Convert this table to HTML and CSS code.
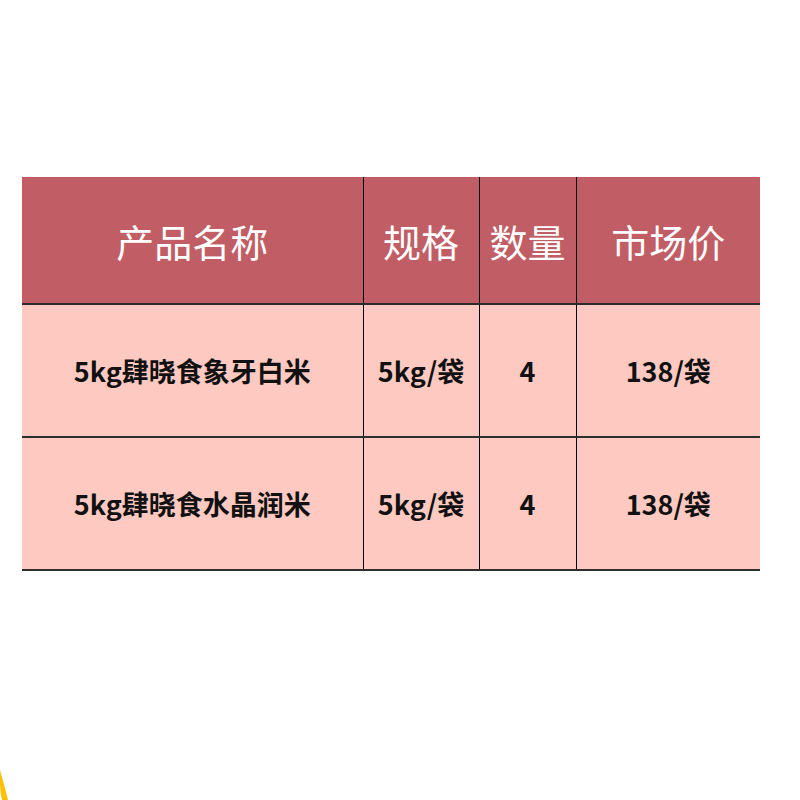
FILE: index.html
```html
<!DOCTYPE html>
<html lang="zh">
<head>
<meta charset="utf-8">
<link rel="stylesheet" href="styles.css">
</head>
<body>
<div class="page">
  <table class="price-table">
    <colgroup>
      <col class="c-name">
      <col class="c-spec">
      <col class="c-qty">
      <col class="c-price">
    </colgroup>
    <thead>
      <tr class="head-row">
        <th>产品名称</th>
        <th class="vl">规格</th>
        <th class="vl">数量</th>
        <th class="vl">市场价</th>
      </tr>
    </thead>
    <tbody>
      <tr class="row r1">
        <td>5kg肆晓食象牙白米</td>
        <td class="vl">5kg/袋</td>
        <td class="vl">4</td>
        <td class="vl">138/袋</td>
      </tr>
      <tr class="row r2">
        <td>5kg肆晓食水晶润米</td>
        <td class="vl">5kg/袋</td>
        <td class="vl">4</td>
        <td class="vl">138/袋</td>
      </tr>
    </tbody>
  </table>
  <svg class="deco" width="20" height="30" viewBox="0 0 20 30">
    <path d="M0 0 Q4 14 8 30 L2 30 Q0 22 0 14 Z" fill="#ffc000"/>
  </svg>
</div>
</body>
</html>
```

FILE: styles.css
```css
html, body {
  margin: 0;
  padding: 0;
  background: #ffffff;
}
.page {
  position: relative;
  width: 800px;
  height: 800px;
  overflow: hidden;
  padding-top: 177px;
  padding-left: 22px;
  box-sizing: border-box;
}
.price-table {
  border-collapse: collapse;
  width: 738px;
  table-layout: fixed;
  font-family: "Noto Sans CJK SC", "Noto Sans", sans-serif;
}
.c-name { width: 341px; }
.c-spec { width: 116px; }
.c-qty { width: 97px; }
.c-price { width: 184px; }
.head-row th {
  height: 126px;
  padding: 0;
  background: #c15d65;
  color: #ffffff;
  font-size: 38px;
  font-weight: 400;
  text-align: center;
  vertical-align: middle;
  border-bottom: 2px solid #2a2a2a;
}
.row td {
  padding: 0;
  background: #fdc9c1;
  color: #111111;
  font-size: 27px;
  font-weight: 700;
  text-align: center;
  vertical-align: middle;
  border-bottom: 2px solid #2e2e2e;
}
.r1 td { height: 131px; }
.r2 td { height: 131px; }
.vl {
  border-left: 1px solid #000000;
}
.deco {
  position: absolute;
  left: 0;
  bottom: 0;
}
```
